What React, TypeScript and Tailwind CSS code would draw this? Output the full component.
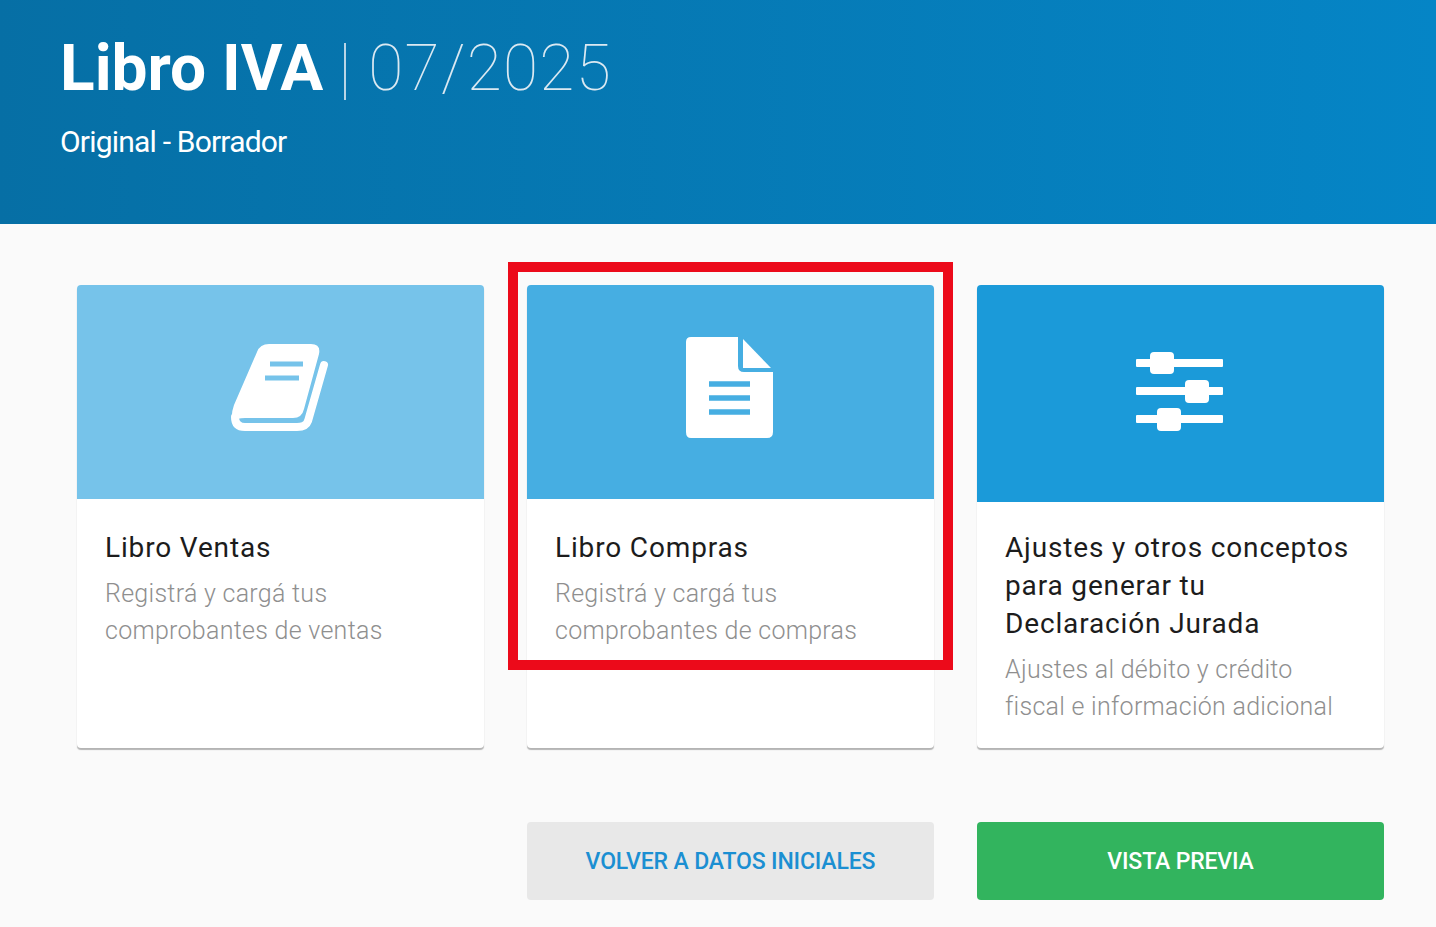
const BookIcon = () => (
  <svg className="mb-[12px] mr-[10px]" width="150" height="130" viewBox="0 0 150 130" fill="none">
    <path d="M123 44 L107 100 Q105 106 96 106 H44 Q34 106 34 96" stroke="#fff" strokeWidth="8" strokeLinecap="round" />
    <path d="M68 23 H110 Q120 23 118 33 L103 88 Q101 97 92 97 H44 Q36 97 31 100 Q30 92 33 84 L56 31 Q59 23 68 23 Z" fill="#fff" />
    <path d="M69 43 H102 M64 57 H98" stroke="#76c3ea" strokeWidth="5" />
  </svg>
);

const DocIcon = () => (
  <svg className="mb-[14px] mr-[4px]" width="140" height="130" viewBox="0 0 140 130" fill="none">
    <path d="M32 17 H79 V46 Q79 52 85 52 H114 V112 Q114 118 108 118 H32 Q27 118 27 112 V22 Q27 17 32 17 Z" fill="#fff" />
    <path d="M84 19 L112 48 H84 Z" fill="#fff" />
    <path d="M50 64 H91 M50 78 H91 M50 92 H91" stroke="#46aee2" strokeWidth="5.5" />
  </svg>
);

const SlidersIcon = () => (
  <svg className="mb-[8px] mr-[2px]" width="140" height="120" viewBox="0 0 140 120" fill="#fff">
    <rect x="26" y="29" width="87" height="8" rx="1" />
    <rect x="26" y="57" width="87" height="8" rx="1" />
    <rect x="26" y="85" width="87" height="8" rx="1" />
    <rect x="40" y="22" width="24" height="22" rx="4" />
    <rect x="75" y="50" width="24" height="23" rx="4" />
    <rect x="47" y="78" width="24" height="23" rx="4" />
  </svg>
);

const Card = ({
  banner,
  title,
  text,
  children,
}: {
  banner: string;
  title: string[];
  text: string[];
  children: React.ReactNode;
}) => (
  <div className="h-full bg-white rounded shadow-[0_2px_1px_rgba(0,0,0,0.28)] overflow-hidden">
    <div className={`${banner} flex items-center justify-center`}>{children}</div>
    <div className="pl-[28px] pr-[20px] pb-[23px]">
      <h3 className="text-[28px] leading-[38px] font-normal tracking-[0.85px] text-[#1c1c1c]">
        {title.map((t) => (
          <div key={t}>{t}</div>
        ))}
      </h3>
      <p className="mt-2 text-[25px] leading-[37px] font-light tracking-[0.28px] text-[#8f8f8f]">
        {text.map((t) => (
          <span key={t} className="block">
            {t}
          </span>
        ))}
      </p>
    </div>
  </div>
);

export default function App() {
  return (
    <div className="h-[927px] overflow-hidden bg-[#fafafa] font-['Roboto',sans-serif]">
      <header className="h-[224px] bg-gradient-to-r from-[#066fa5] to-[#0585c6] pl-[60px] pt-[27px]">
        <h1 className="flex items-center text-[64px] leading-[84px] text-white">
          <span className="font-bold">Libro IVA</span>
          <span className="ml-[21px] mt-[4px] h-[57px] w-[2px] bg-[#b9d5e6]" />
          <span className="ml-[22px] font-thin tracking-[1.3px] text-[#dbe9f2]">07/2025</span>
        </h1>
        <p className="mt-[11px] text-[30px] leading-[40px] text-white tracking-[-0.8px]">Original - Borrador</p>
      </header>

      <main className="pl-[77px] pr-[52px] pt-[61px]">
        <div className="grid grid-cols-3 gap-[43px]">
          <Card
            banner="h-[214px] mb-[30px] bg-[#76c3ea]"
            title={["Libro Ventas"]}
            text={["Registrá y cargá tus", "comprobantes de ventas"]}
          >
            <BookIcon />
          </Card>
          <div className="relative">
            <Card
              banner="h-[214px] mb-[30px] bg-[#46aee2]"
              title={["Libro Compras"]}
              text={["Registrá y cargá tus", "comprobantes de compras"]}
            >
              <DocIcon />
            </Card>
            <div className="absolute left-[-19px] top-[-23px] h-[408px] w-[445px] border-[10px] border-[#ec0a1a]" />
          </div>
          <Card
            banner="h-[217px] mb-[27px] bg-[#1b9ad9]"
            title={["Ajustes y otros conceptos", "para generar tu", "Declaración Jurada"]}
            text={["Ajustes al débito y crédito", "fiscal e información adicional"]}
          >
            <SlidersIcon />
          </Card>
        </div>

        <div className="mt-[74px] grid grid-cols-3 gap-[43px]">
          <div />
          <button className="h-[78px] rounded bg-[#e8e8e8] pt-[2px] text-[23px] font-medium uppercase tracking-[-0.15px] text-[#1b8fd2]">
            Volver a datos iniciales
          </button>
          <button className="h-[78px] rounded bg-[#32b45e] pt-[2px] text-[23px] font-medium uppercase tracking-[-0.15px] text-white">
            Vista previa
          </button>
        </div>
      </main>
    </div>
  );
}
